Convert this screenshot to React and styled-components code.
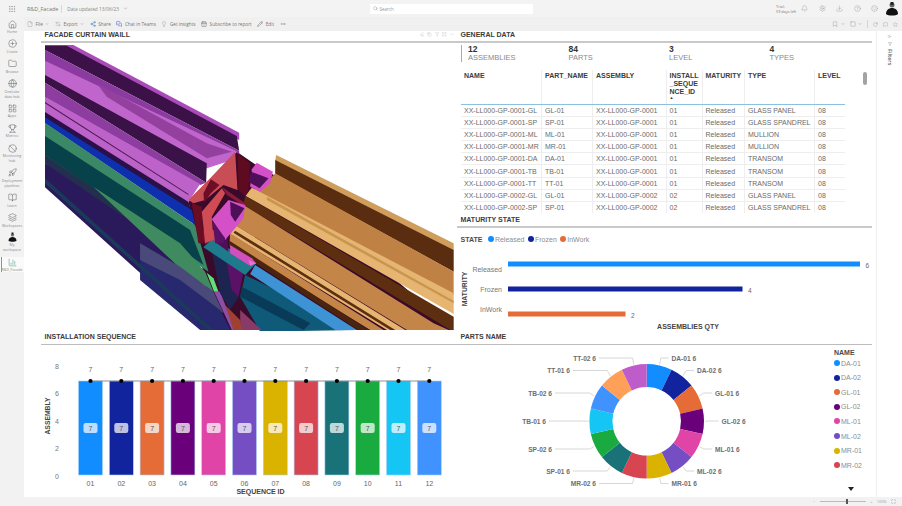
import React from "react";
import styled, { createGlobalStyle } from "styled-components";
import {
  Home, CirclePlus, Folder, Globe, LayoutGrid, Trophy, Ban, Rocket, BookOpen, Layers, BarChart3,
  File, ArrowLeftRight, Share2, MessagesSquare, Lightbulb, CalendarCheck, Pencil, MoreHorizontal,
  ChevronDown, Search, Bell, Settings, Download, HelpCircle, Smile, Bookmark, Square, RotateCw,
  MessageSquare, Star, Eraser, Copy, Filter, Expand, Minus, ChevronsRight, Grip, Maximize
} from "lucide-react";

const C = ["#118DFF","#12239E","#E66C37","#6B007B","#E044A7","#744EC2","#D9B300","#D64550","#197278","#1AAB40","#15C6F4","#4092FF","#FFA058","#BE5DC9"];
const FONT = '"Liberation Sans", Arial, sans-serif';

const Global = createGlobalStyle`
  html, body { margin: 0; padding: 0; background: #fff; }
  body { width: 902px; height: 506px; overflow: hidden; font-family: ${FONT}; }
  * { box-sizing: border-box; }
`;

const Shell = styled.div`
  width: 902px; height: 506px; display: grid; overflow: hidden; background: #f2f2f2;
  grid-template-columns: 24px 1fr; grid-template-rows: 17px 14px 466px 9px;
`;
const TopBar = styled.header`
  grid-column: 1 / 3; display: grid; grid-template-columns: 1fr 163px 1fr; align-items: center;
  background: #f3f3f3; font-family: "Open Sans", sans-serif; color: #777; font-size: 5.4px;
`;
const TopLeft = styled.div`display: flex; align-items: center; height: 100%;`;
const Waffle = styled.span`width: 27px; padding-left: 8px; display: flex; color: #888;`;
const FileName = styled.span`padding-right: 3px; border-right: 1px solid #d8d8d8; line-height: 8px; margin-right: 5px;`;
const Updated = styled.span`display: flex; align-items: center; gap: 4px; color: #888; font-size: 4.8px;`;
const SearchBox = styled.div`
  height: 10px; background: #fff; display: flex; align-items: center; gap: 2px; padding-left: 3px; color: #999; font-size: 4.5px;
`;
const TopRight = styled.div`display: flex; justify-content: flex-end; align-items: center; color: #888; padding-right: 3px;`;
const Trial = styled.div`font-size: 3.8px; line-height: 5px; width: 25px; color: #777;`;
const TopIcons = styled.div`display: flex; gap: 10.5px; margin-right: 7px; color: #999;`;
const Avatar = styled.svg`width: 14px; height: 15px; display: block;`;

const Rail = styled.nav`
  grid-row: 2 / 4; display: flex; flex-direction: column; align-items: center; gap: 4.85px; padding-top: 2px;
  background: #f2f2f2; font-family: "Open Sans", sans-serif;
`;
const RailItem = styled.div`
  position: relative; width: 24px; display: flex; flex-direction: column; align-items: center; color: #666;
  background: ${p => (p.$active ? "#fafafa" : "transparent")};
  &::before { content: ""; display: ${p => (p.$active ? "block" : "none")}; position: absolute; left: 1px; top: 0; bottom: 0; width: 1px; background: #5fa8a0; }
`;
const RailIcon = styled.span`height: 10px; display: flex; align-items: center; color: ${p => p.$color || "#5c5c5c"};`;
const RailLabel = styled.span`font-size: 3.6px; line-height: 5px; white-space: nowrap; color: #888; text-align: center;`;

const Toolbar = styled.div`
  display: flex; align-items: center; justify-content: space-between; background: #f0f0f0; padding: 0 4px 0 3px;
  font-family: "Open Sans", sans-serif; font-size: 4.7px; color: #777;
`;
const ToolGroup = styled.div`display: flex; align-items: center; gap: ${p => p.$gap || 5.5}px;`;
const Tool = styled.span`display: flex; align-items: center; gap: 2.5px; white-space: nowrap;`;
const ToolSep = styled.span`width: 1px; height: 8px; background: #d5d5d5;`;

const Main = styled.main`display: flex; min-height: 0; background: #fff;`;
const Canvas = styled.div`
  width: 852px; padding-left: 17px; display: grid; grid-template-columns: 416px 415px; grid-template-rows: 302px 164px;
`;
const FilterPane = styled.aside`
  position: relative; flex: 1; border-left: 1px solid #efefef; display: flex; flex-direction: column; align-items: center; padding-top: 3px; gap: 3px; color: #777;
`;
const FilterWord = styled.span`writing-mode: vertical-rl; font-family: "Open Sans", sans-serif; font-size: 5.5px; font-weight: 600; color: #666;`;

const Status = styled.footer`
  grid-column: 1 / 3; background: #f2f2f2; display: flex; justify-content: flex-end; align-items: center; gap: 4.5px; padding-right: 6px;
  font-family: "Open Sans", sans-serif; font-size: 3.8px; color: #999;
`;
const Zoom = styled.div`
  position: relative; width: 46px; height: 1px; background: #bbb;
  &::after { content: ""; position: absolute; left: 26px; top: -2px; width: 2px; height: 5px; background: #555; }
`;

const Section = styled.section`display: flex; flex-direction: column; min-height: 0;`;
const Heading = styled.h2`
  flex: none; margin: 0; height: 12px; padding-left: 3.5px; line-height: 8px; font-size: 7px; font-weight: 700; color: #3c3c3c;
  border-bottom: ${p => (p.$thin ? 1 : 2)}px solid ${p => (p.$thin ? "#bdbdbd" : "#c9c9c9")}; white-space: nowrap;
  display: flex; justify-content: space-between;
`;
const VisualIcons = styled.span`display: flex; gap: 3px; color: #c4c4c4; padding: 1px 3px 0 0;`;
const ModelWrap = styled.div`padding: 2px 3px 0 4px;`;
const ModelSvg = styled.svg`display: block; width: 409px; height: 286px; filter: blur(0.45px);`;

const Stack = styled.div`display: flex; flex-direction: column; min-height: 0;`;
const General = styled(Section)`flex: none; height: 185px;`;
const Kpis = styled.div`display: flex; margin: 2px 0 0 4px; border-left: 1px solid #aaa; height: 17px;`;
const Kpi = styled.div`width: 100.5px; padding-left: 6px;`;
const KpiValue = styled.div`font-size: 8.5px; line-height: 9px; font-weight: 700; color: #333;`;
const KpiLabel = styled.div`font-size: 7.5px; line-height: 8px; color: #8a8a8a;`;
const TableWrap = styled.div`position: relative; margin: 8px 0 0 4px; height: 143px; overflow: hidden;`;
const Table = styled.table`
  width: 383px; table-layout: fixed; border-collapse: collapse; font-size: 7px; color: #6a6a6a;
  th { height: 34px; padding: 2px 0 0 3px; vertical-align: top; text-align: left; color: #3d3d3d; font-weight: 700; line-height: 8px; border-right: 1px solid #eee; border-bottom: 1px solid #8cc0e0; white-space: nowrap; }
  td { height: 12.2px; padding: 0 0 0 3px; line-height: 11px; border-right: 1px solid #eee; border-bottom: 1px solid #eee; white-space: nowrap; overflow: hidden; }
  th:last-child, td:last-child { border-right: 0; }
`;
const SortMark = styled.span`display: block; font-size: 4px; line-height: 4px; color: #333;`;
const Thumb = styled.div`position: absolute; right: 5px; top: 2px; width: 4px; height: 13px; border-radius: 2px; background: #a3a3a3;`;

const Legend = styled.div`display: flex; align-items: center; gap: 2.5px; height: 10px; margin: 6px 0 0 3.5px; font-size: 7px; color: #8d8d8d;`;
const LegendTitle = styled.b`color: #4a4a4a; margin-right: 3px; font-weight: 700;`;
const LegendItem = styled.span`display: flex; align-items: center; gap: 1px; margin-right: 1px;`;
const Dot = styled.i`display: block; flex: none; width: 6px; height: 6px; border-radius: 50%; background: ${p => p.$c};`;
const ChartSvg = styled.svg`display: block; flex: none; font-family: ${FONT}; overflow: hidden;`;
const Donut = styled.div`position: relative; flex: 1; min-height: 0;`;
const PartsLegend = styled.div`position: absolute; left: 377px; top: 3.5px; width: 36px; display: flex; flex-direction: column; gap: 5.6px; font-size: 7px; color: #8d8d8d;`;
const PartsTitle = styled.b`color: #4a4a4a; font-weight: 700; line-height: 8px; margin-bottom: -3.5px;`;
const PartsItem = styled.span`display: flex; align-items: center; gap: 1px; line-height: 9px;`;
const DownArrow = styled.span`position: absolute; left: 391px; top: 142px; width: 0; height: 0; border: 3px solid transparent; border-top: 4px solid #222; border-bottom: 0;`;

const railItems = [
  ["Home", Home], ["Create", CirclePlus], ["Browse", Folder], ["OneLake\ndata hub", Globe], ["Apps", LayoutGrid], ["Metrics", Trophy],
  ["Monitoring\nhub", Ban], ["Deployment\npipelines", Rocket], ["Learn", BookOpen], ["Workspaces", Layers],
];

const rows = [
  ["XX-LL000-GP-0001-GL","GL-01","XX-LL000-GP-0001","01","Released","GLASS PANEL","08"],
  ["XX-LL000-GP-0001-SP","SP-01","XX-LL000-GP-0001","01","Released","GLASS SPANDREL","08"],
  ["XX-LL000-GP-0001-ML","ML-01","XX-LL000-GP-0001","01","Released","MULLION","08"],
  ["XX-LL000-GP-0001-MR","MR-01","XX-LL000-GP-0001","01","Released","MULLION","08"],
  ["XX-LL000-GP-0001-DA","DA-01","XX-LL000-GP-0001","01","Released","TRANSOM","08"],
  ["XX-LL000-GP-0001-TB","TB-01","XX-LL000-GP-0001","01","Released","TRANSOM","08"],
  ["XX-LL000-GP-0001-TT","TT-01","XX-LL000-GP-0001","01","Released","TRANSOM","08"],
  ["XX-LL000-GP-0002-GL","GL-01","XX-LL000-GP-0002","02","Released","GLASS PANEL","08"],
  ["XX-LL000-GP-0002-SP","SP-01","XX-LL000-GP-0002","02","Released","GLASS SPANDREL","08"],
];
const colW = [80.5, 51, 73.5, 36, 42.5, 70, 30];

const facets = [
  ["#3a0a2a","445,515 590,365 640,400 710,440 1240,900 525,900"],
  // purple mullion
  ["#a94bb8","15,45 100,45 597,308 597,330 15,60"],
  ["#3b1147","15,47 80,47 590,318 597,362 15,60"],
  ["#8b3a9f","15,60 597,362 597,372 15,95"],
  ["#c065cc","15,92 590,364 560,395 500,415 15,138"],
  ["#93409f","170,160 500,340 575,365 500,385 200,200"],
  ["#3a1248","15,135 500,400 498,458 15,158"],
  ["#8d3c9f","15,158 498,458 480,465 15,202"],
  ["#bd62c9","15,200 480,462 445,515 15,248"],
  ["#47184f","15,216 445,492 445,495 15,220"],
  ["#2a0f48","15,246 445,515 455,550 15,264"],
  ["#0e2fae","15,262 455,540 465,585 15,280"],
  // glass
  ["#3b8866","15,278 465,585 505,725 15,400"],
  ["#07414a","15,318 450,600 490,705 15,375"],
  ["#22304e","15,375 300,570 340,700 15,400"],
  ["#2a1a5c","15,400 420,675 540,840 575,900 490,900 15,472"],
  ["#3f8a5e","160,470 420,640 495,725 520,785 420,715"],
  ["#4a4a7a","300,640 420,710 520,785 550,850 420,770 300,690"],
  ["#28286e","300,690 420,750 540,840 570,900 480,900 300,750"],
  ["#1a3a5a","15,445 520,900 505,900 15,460"],
  ["#61e07a","500,728 520,745 535,785 522,785"],
  ["#8c4fa8","522,785 540,785 585,900 575,900"],
  // bronze mullion
  ["#cf9d5c","708,375 1240,640 1240,662 705,392"],
  ["#5a2c10","705,390 1240,660 1240,725 705,432"],
  ["#c08144","705,430 1240,725 1240,795 635,475 660,480"],
  ["#e6b572","635,473 1240,790 1240,852 615,497"],
  ["#c9964f","680,500 1240,812 1240,820 680,510"],
  ["#5d2f10","615,497 1240,860 1240,900 1230,900 610,525"],
  ["#c48549","610,525 1180,880 1225,900 1100,900 585,585"],
  ["#e6b572","585,585 1095,900 1040,900 570,612"],
  ["#5d2f10","585,602 1065,900 1050,900 580,608"],
  ["#c48549","570,610 1030,900 990,900 568,640"],
  ["#4a240e","568,632 985,900 955,900 565,648"],
  // lower glass
  ["#0f5a78","615,735 950,900 660,905 600,800"],
  ["#093a58","605,770 810,880 790,900 600,800"],
  ["#3d93d4","645,705 950,900 885,900 630,732"],
  ["#1e2450","515,665 610,725 595,800 570,840 540,790"],
  ["#8a3a68","600,840 665,900 600,900"],
  ["#a04030","555,825 600,870 605,900 580,900"],
  ["#5a1166","560,700 610,725 595,800 575,780"],
  ["#1f7a8c","490,652 515,628 648,700 615,735"],
  ["#d14fbe","570,645 635,685 648,700 625,705 570,670"],
  ["#f070d0","625,690 648,700 630,708"],
  // centre joint
  ["#7a0f2a","480,600 495,645 515,625 505,600"],
  ["#c94d55","505,600 530,600 530,640 515,625"],
  ["#4d0f58","530,600 560,600 565,665 530,640"],
  ["#c94d55","445,510 510,445 585,365 592,480 550,465 495,510 460,520"],
  ["#5e0a20","592,368 630,400 625,485 615,500 595,480"],
  ["#6d0d26","512,448 538,465 512,490 492,518 490,490"],
  ["#6b0c24","455,520 485,530 490,640 475,640"],
  ["#cf4c54","485,545 545,475 555,490 515,560 520,630 495,640"],
  ["#8a1a3a","545,470 615,520 615,530 560,495"],
  ["#d450c6","635,418 650,398 698,425 690,460 660,485 630,470"],
  ["#4d0f58","632,425 685,445 658,475 625,455"],
  ["#d450c6","515,568 565,510 615,525 610,565 555,630"],
  ["#4d0f58","570,515 613,535 585,575 572,555"],
  ["#5a1166","517,572 555,625 550,640 525,640"],
];

const installX = i => 37.5 + 30.8 * i;

function InstallChart() {
  const top = 36, bot = 130;
  return (
    <ChartSvg width="416" height="152" viewBox="0 0 416 152">
      {[8, 6, 4, 2, 0].map((n, i) => (
        <text key={n} x="16" y={[24, 51, 78.5, 106, 133.5][i]} fontSize="7" fill="#777" textAnchor="middle">{n}</text>
      ))}
      <text transform="translate(9,71) rotate(-90)" fontSize="6.8" fontWeight="700" fill="#444" textAnchor="middle">ASSEMBLY</text>
      {C.slice(0, 12).map((c, i) => {
        const x = installX(i), mid = x + 12;
        return (
          <g key={c}>
            <rect x={x} y={top} width="24" height={bot - top} fill={c} stroke="#a9d3fb" strokeWidth="0.6" />
            <rect x={mid - 7} y="78" width="14" height="10" rx="2.2" fill="#fff" opacity="0.72" />
            <text x={mid} y="85.6" fontSize="7" fill="#555" textAnchor="middle">7</text>
            <text x={mid} y="27" fontSize="7" fill="#666" textAnchor="middle">7</text>
            <text x={mid} y="140.5" fontSize="7" fill="#666" textAnchor="middle">{String(i + 1).padStart(2, "0")}</text>
          </g>
        );
      })}
      <line x1={installX(0) + 12} x2={installX(11) + 12} y1="36" y2="36" stroke="#777" strokeWidth="0.8" />
      {C.slice(0, 12).map((c, i) => <circle key={c} cx={installX(i) + 12} cy="36" r="2.1" fill="#000" />)}
      <text x="219.5" y="148.5" fontSize="7" fontWeight="700" fill="#444" textAnchor="middle">SEQUENCE ID</text>
    </ChartSvg>
  );
}

function MaturityChart() {
  const data = [["Released", 51, 352, 6, 269, 20], ["Frozen", 51, 234.5, 4, 289, 45], ["InWork", 51, 117.5, 2, 309, 70]];
  const colors = [C[0], C[1], C[2]];
  return (
    <ChartSvg width="415" height="89" viewBox="0 0 415 89">
      <text transform="translate(9.5,45) rotate(-90)" fontSize="6.8" fontWeight="700" fill="#444" textAnchor="middle">MATURITY</text>
      {data.map(([n, x, w, v, ly, by], i) => (
        <g key={n}>
          <text x="45" y={ly - 244 + 2.5} fontSize="7" fill="#777" textAnchor="end">{n}</text>
          <rect x={x} y={by - 2.5} width={w} height="5" fill={colors[i]} />
          <text x={x + w + 5.5} y={by + 3.5} fontSize="6.5" fill="#666">{v}</text>
        </g>
      ))}
      <text x="231" y="85" fontSize="7" fontWeight="700" fill="#444" textAnchor="middle">ASSEMBLIES QTY</text>
    </ChartSvg>
  );
}

const parts = ["DA-01","DA-02","GL-01","GL-02","ML-01","ML-02","MR-01","MR-02","SP-01","SP-02","TB-01","TB-02","TT-01","TT-02"];
const donutLabels = [
  [214.5, 13, 1],[240, 25.5, 1],[258, 48, 1],[264.5, 76, 1],[258, 104, 1],[240, 126, 1],[214.5, 138.5, 1],
  [139, 138.5, -1],[113, 126, -1],[95, 104, -1],[89, 76, -1],[95, 48, -1],[113, 25.5, -1],[139, 13, -1],
];

function DonutChart() {
  const cx = 189.7, cy = 76.3, R = 57.3, r = 34.3, n = 14;
  const pt = (rad, a) => [cx + rad * Math.sin(a), cy - rad * Math.cos(a)];
  return (
    <ChartSvg width="330" height="152" viewBox="0 0 330 152">
      {C.map((c, i) => {
        const a0 = (i * 2 * Math.PI) / n, a1 = ((i + 1) * 2 * Math.PI) / n;
        const [x0, y0] = pt(R, a0), [x1, y1] = pt(R, a1), [x2, y2] = pt(r, a1), [x3, y3] = pt(r, a0);
        return <path key={c} d={`M${x0} ${y0}A${R} ${R} 0 0 1 ${x1} ${y1}L${x2} ${y2}A${r} ${r} 0 0 0 ${x3} ${y3}Z`} fill={c} />;
      })}
      {parts.map((p, i) => {
        const am = ((i + 0.5) * 2 * Math.PI) / n;
        const [lx, ly, side] = donutLabels[i];
        const [ax, ay] = pt(R + 1, am);
        const endX = lx - side * 3;
        const [bx] = pt(R + 6, am);
        return (
          <g key={p}>
            <path d={`M${ax} ${ay}L${bx} ${ly}L${endX} ${ly}`} fill="none" stroke="#bdbdbd" strokeWidth="0.6" />
            <text x={lx} y={ly + 2.5} fontSize="6.6" fontWeight="700" fill="#6e6e6e" textAnchor={side > 0 ? "start" : "end"}>{p} 6</text>
          </g>
        );
      })}
    </ChartSvg>
  );
}

export default function App() {
  return (
    <Shell>
      <Global />
      <TopBar>
        <TopLeft>
          <Waffle><Grip size={8} strokeWidth={1.4} /></Waffle>
          <FileName>R&amp;D_Facade</FileName>
          <Updated>Data updated 13/06/23 <ChevronDown size={5} /></Updated>
        </TopLeft>
        <SearchBox><Search size={5} />Search</SearchBox>
        <TopRight>
          <Trial>Trial:<br />59 days left</Trial>
          <TopIcons>
            <Bell size={7} strokeWidth={1.4} /><Settings size={7} strokeWidth={1.4} /><Download size={7} strokeWidth={1.4} />
            <HelpCircle size={7} strokeWidth={1.4} /><Smile size={7} strokeWidth={1.4} />
          </TopIcons>
          <Avatar viewBox="0 0 14 15">
            <circle cx="7" cy="4" r="2.5" fill="#666" />
            <rect x="5.5" y="1" width="3" height="3" fill="#222" />
            <path d="M1 13c0-4 3-6 6-6s6 2 6 6c-2 2-10 2-12 0z" fill="#111" />
          </Avatar>
        </TopRight>
      </TopBar>

      <Rail>
        {railItems.map(([label, Icon]) => (
          <RailItem key={label}>
            <RailIcon><Icon size={9} strokeWidth={1.3} /></RailIcon>
            {label.split("\n").map(l => <RailLabel key={l}>{l}</RailLabel>)}
          </RailItem>
        ))}
        <RailItem>
          <RailIcon>
            <svg width="9" height="10" viewBox="0 0 9 10"><circle cx="4.5" cy="3" r="1.6" fill="#777" /><rect x="3.5" y="0.5" width="2" height="2" fill="#222" /><path d="M0.5 9c0-3 2-4 4-4s4 1 4 4c-2 1-6 1-8 0z" fill="#111" /></svg>
          </RailIcon>
          <RailLabel>My</RailLabel>
          <RailLabel>workspace</RailLabel>
        </RailItem>
        <RailItem $active>
          <RailIcon $color="#7cb8a8"><BarChart3 size={9} strokeWidth={2} /></RailIcon>
          <RailLabel>R&amp;D_Facade</RailLabel>
        </RailItem>
      </Rail>

      <Toolbar>
        <ToolGroup>
          <Tool><File size={6} strokeWidth={1.2} />File <ChevronDown size={4} /></Tool>
          <Tool><ArrowLeftRight size={6} strokeWidth={1.2} />Export <ChevronDown size={4} /></Tool>
          <Tool><Share2 size={6} color="#3a7cc0" strokeWidth={1.8} />Share</Tool>
          <Tool><MessagesSquare size={6} color="#5059c9" strokeWidth={2} />Chat in Teams</Tool>
          <Tool><Lightbulb size={6} strokeWidth={1.2} />Get insights</Tool>
          <Tool><CalendarCheck size={6} strokeWidth={1.6} color="#555" />Subscribe to report</Tool>
          <Tool><Pencil size={6} strokeWidth={1.6} color="#555" />Edit</Tool>
          <Tool><MoreHorizontal size={6} /></Tool>
        </ToolGroup>
        <ToolGroup $gap={5}>
          <Tool><Bookmark size={6} strokeWidth={1.2} /><ChevronDown size={4} /></Tool>
          <Tool><Square size={6} strokeWidth={1.2} /><ChevronDown size={4} /></Tool>
          <ToolSep />
          <RotateCw size={5} strokeWidth={1.2} /><MessageSquare size={5} strokeWidth={1.2} /><Star size={5} strokeWidth={1.2} />
        </ToolGroup>
      </Toolbar>

      <Main>
        <Canvas>
          <Section>
            <Heading>
              FACADE CURTAIN WAILL
              <VisualIcons>
                <Eraser size={4.5} /><Copy size={4.5} /><Filter size={4.5} /><Expand size={4.5} /><Minus size={4.5} />
              </VisualIcons>
            </Heading>
            <ModelWrap>
              <ModelSvg viewBox="15 45 1226 858" preserveAspectRatio="none">
                <defs>
                  <clipPath id="modelClip"><rect x="15" y="45" width="1226" height="858" /></clipPath>
                </defs>
                <g clipPath="url(#modelClip)">
                  {facets.map(([fill, points], i) => <polygon key={i} fill={fill} points={points} />)}
                </g>
              </ModelSvg>
            </ModelWrap>
          </Section>

          <Stack>
            <General>
              <Heading>GENERAL DATA</Heading>
              <Kpis>
                {[["12","ASSEMBLIES"],["84","PARTS"],["3","LEVEL"],["4","TYPES"]].map(([v, l]) => (
                  <Kpi key={l}><KpiValue>{v}</KpiValue><KpiLabel>{l}</KpiLabel></Kpi>
                ))}
              </Kpis>
              <TableWrap>
                <Table>
                  <colgroup>{colW.map((w, i) => <col key={i} style={{ width: w }} />)}</colgroup>
                  <thead>
                    <tr>
                      <th>NAME</th><th>PART_NAME</th><th>ASSEMBLY</th>
                      <th>INSTALL<br />_SEQUE<br />NCE_ID<SortMark>▲</SortMark></th>
                      <th>MATURITY</th><th>TYPE</th><th>LEVEL</th>
                    </tr>
                  </thead>
                  <tbody>
                    {rows.map(r => <tr key={r[0]}>{r.map((c, i) => <td key={i}>{c}</td>)}</tr>)}
                  </tbody>
                </Table>
                <Thumb />
              </TableWrap>
            </General>
            <Section>
              <Heading>MATURITY STATE</Heading>
              <Legend>
                <LegendTitle>STATE</LegendTitle>
                <LegendItem><Dot $c={C[0]} />Released</LegendItem>
                <LegendItem><Dot $c={C[1]} />Frozen</LegendItem>
                <LegendItem><Dot $c={C[2]} />InWork</LegendItem>
              </Legend>
              <MaturityChart />
            </Section>
          </Stack>

          <Section>
            <Heading $thin>INSTALLATION SEQUENCE</Heading>
            <InstallChart />
          </Section>
          <Section>
            <Heading $thin>PARTS NAME</Heading>
            <Donut>
              <DonutChart />
              <PartsLegend>
                <PartsTitle>NAME</PartsTitle>
                {parts.slice(0, 8).map((p, i) => <PartsItem key={p}><Dot $c={C[i]} />{p}</PartsItem>)}
              </PartsLegend>
              <DownArrow />
            </Donut>
          </Section>
        </Canvas>
        <FilterPane>
          <ChevronsRight size={5} />
          <Filter size={4} />
          <FilterWord>Filters</FilterWord>
        </FilterPane>
      </Main>

      <Status>
        <span>−</span><Zoom /><span>+</span><span>100%</span><Maximize size={5} />
      </Status>
    </Shell>
  );
}
